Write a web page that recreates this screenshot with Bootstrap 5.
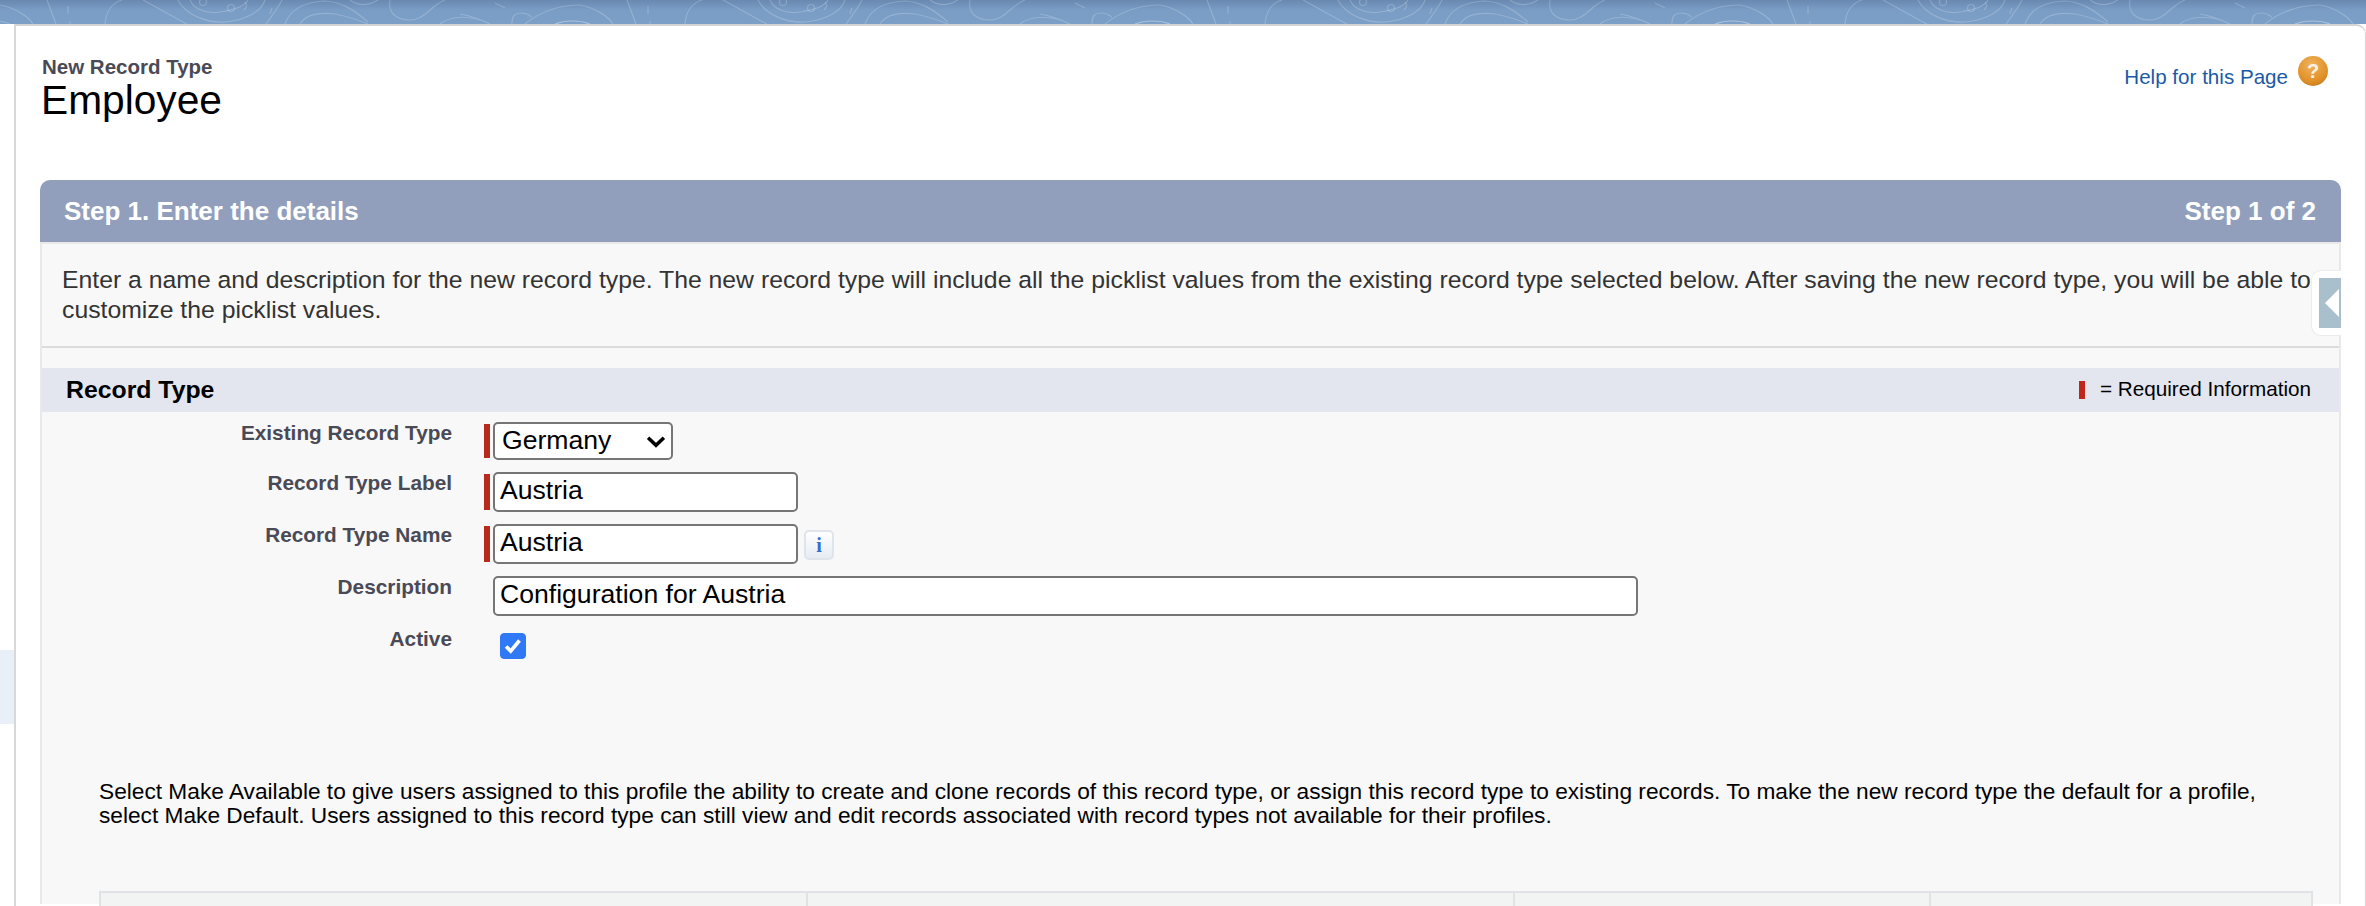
<!DOCTYPE html>
<html lang="en">
<head>
<meta charset="utf-8">
<title>New Record Type</title>
<link href="https://cdn.jsdelivr.net/npm/bootstrap@5.3.0/dist/css/bootstrap.min.css" rel="stylesheet">
<style>
html,body{height:906px;overflow:hidden}
body{font-family:"Liberation Sans",Arial,sans-serif;background:#fff;color:#000}
.sf-strip{height:24px;background:linear-gradient(#6a89b0 0,#6f90b9 4px,#7a9dc5 10px,#7c9fc7 100%);overflow:hidden}
.sf-strip svg{display:block}
.sf-shell{height:882px}
.sf-rail{width:14px;padding-top:626px;flex:none}
.sf-rail-on{height:74px;background:#e8eff9}
.sf-main{border-left:2px solid #d8d8d8;border-top:2px solid #d4d4d4;border-right:1px solid #d4d4d4;border-top-right-radius:10px;padding:0 24px 0 24px;position:relative}
.sf-crumbs{height:154px;padding-top:29px}
.sf-eyebrow{font-size:20.5px;font-weight:700;color:#4a4a56;line-height:24px;margin-left:2px}
.sf-title{font-size:40.7px;line-height:42px;margin:0;font-weight:400;color:#000;margin-left:1px}
.sf-help{padding-top:1px;padding-right:13px;gap:10px}
.sf-help a{font-size:20.6px;color:#1b5aa5;text-decoration:none;line-height:24px;padding-top:9px}
.sf-head{height:62px;background:#919fbc;color:#fff;border-radius:10px 10px 0 0;padding:0 25px 0 24px;font-size:26px;font-weight:700}
.sf-panel{background:#f8f8f8;border:solid #e9e9e9;border-width:2px 2px 0 2px;height:662px;position:relative}
.sf-intro{font-size:24.77px;line-height:30px;color:#333;padding:21px 20px 0 20px;height:104px;border-bottom:2px solid #dcdcdc;margin:0}
.sf-sect{margin-top:20px;height:44px;background:#e3e6ee;padding:0 28px 0 24px}
.sf-sect-t{font-size:24.8px;font-weight:700;color:#000;padding-bottom:1px}
.sf-req{font-size:20.7px;gap:15px;color:#000}
.sf-req-t{padding-bottom:2px}
.sf-reqbar{width:6px;height:18px;background:#c1261a}
.sf-form{padding-top:10px}
.sf-row{margin-bottom:12px;height:40px}
.sf-row-s{height:38px}
.sf-label{width:410px;text-align:right;font-size:20.8px;font-weight:700;color:#4a4a56;line-height:21px;flex:none}
.sf-bar{width:6px;margin:2px 3px 2px 32px;flex:none;background:#b72a1e}
.sf-nobar{width:41px;flex:none}
.sf-field{height:40px;border:2px solid #767676;border-radius:5px;padding:0 5px 3px;font-size:26.6px;line-height:34px;color:#000;background-color:#fff;box-shadow:none;font-family:"Liberation Sans",Arial,sans-serif}
.sf-field:focus{border-color:#767676;box-shadow:none}
.sf-w1{width:305px}
.sf-wdesc{width:1145px}
.sf-sel{width:180px;height:38px;padding:0 5px 3px 7px;line-height:32px;background-size:20px 13px;background-position:right 5px center;background-image:url("data:image/svg+xml,%3csvg xmlns='http://www.w3.org/2000/svg' viewBox='0 0 19 12'%3e%3cpath d='M2 2.500l7.500 7 7.500-7' fill='none' stroke='%23000' stroke-width='3.400'/%3e%3c/svg%3e")}
.sf-info{width:30px;height:30px;margin:6px 0 0 6px;border:2px solid #dfe3ea;border-radius:5px;background:linear-gradient(#fff,#e6ebf4);color:#2f6fd0;font:700 20px/26px "Liberation Serif",serif;text-align:center}
.sf-check{width:26px;height:26px;margin:5px 0 0 7px;border-radius:4px;background-color:#2f78f6;border-color:#2f78f6}
.sf-check:checked{background-color:#2f78f6;border-color:#2f78f6;background-image:url("data:image/svg+xml,%3csvg xmlns='http://www.w3.org/2000/svg' viewBox='0 0 26 26'%3e%3cpath d='M5.500 13.500l5 5 9.500-11.500' fill='none' stroke='%23fff' stroke-width='4'/%3e%3c/svg%3e")}
.sf-note{font-size:22.7px;line-height:24px;color:#000;padding:0 48px 0 57px;margin:111px 0 0}
.sf-table{margin:64px 0 0 57px;width:2214px;height:60px;background:#f2f3f3;border:2px solid #e0e3e5;table-layout:fixed;border-collapse:collapse}
.sf-table td{border-right:2px solid #e0e3e5;padding:0;background:#f2f3f3}
.sf-col-a{width:707px}
.sf-col-c{width:416px}
.sf-tab{position:absolute;right:-2px;top:26px;width:30px;height:66px;background:#fff;border:1px solid #ececec;border-right:0;border-radius:10px 0 0 10px;padding:7px 0 7px 7px}
.sf-tab-in{height:50px;background:#a9bfcc;display:flex;align-items:center}
</style>
</head>
<body class="d-flex flex-column">
<div class="sf-strip flex-shrink-0">
<svg width="2366" height="24" viewBox="0 0 2366 24" fill="none" stroke="#ffffff" stroke-opacity=".2" stroke-width="1.2">
<defs><g id="sf-tile">
<path d="M0 5C15 8 28 16 33 24M47 0L56 24M68 6V14M70 21V24"/>
<path d="M105 24C106 12 112 3 122 0M143 0C158 8 175 18 187 24"/>
<path d="M178 0C185 14 205 23 225 22C248 20 262 10 265 0M190 0C194 10 208 14 220 12C235 10 245 6 248 0"/>
<circle cx="231" cy="8" r="3.500"/><circle cx="203" cy="2" r="3.500"/><path d="M245 2C248 6 246 8 244 10"/>
<path d="M272 8L270 14M282 0C278 8 272 16 266 24M285 24C290 10 302 2 325 1C340 2 352 8 368 22M300 24C306 14 318 12 335 14C346 16 358 20 368 24"/>
<path d="M350 0C358 6 368 6 378 0M390 0C388 12 395 20 410 20C425 20 430 6 445 0"/>
<path d="M495 3L505 8M440 24C450 16 470 14 490 24M460 14C472 16 482 20 490 24"/>
<path d="M512 24C512 16 514 13 522 13C528 13 530 16 532 17M525 24C540 12 560 5 580 5"/>
<path d="M555 24C565 20 580 20 590 24M-25 24C-15 20 0 20 10 24"/>
</g></defs>
<use href="#sf-tile" x="0"/><use href="#sf-tile" x="580"/><use href="#sf-tile" x="1160"/><use href="#sf-tile" x="1740"/><use href="#sf-tile" x="2320"/>
</svg>
</div>
<div class="sf-shell d-flex">
<div class="sf-rail"><div class="sf-rail-on"></div></div>
<main class="sf-main flex-grow-1">
<div class="sf-crumbs d-flex justify-content-between align-items-start">
<div>
<div class="sf-eyebrow">New Record Type</div>
<h1 class="sf-title">Employee</h1>
</div>
<div class="sf-help d-flex align-items-start">
<a href="#">Help for this Page</a>
<svg width="30" height="30" viewBox="0 0 30 30"><defs><radialGradient id="sfg" cx=".45" cy=".3" r=".8"><stop offset="0" stop-color="#f0b35c"/><stop offset=".7" stop-color="#e08f27"/><stop offset="1" stop-color="#b9751f"/></radialGradient></defs><circle cx="15" cy="15" r="15" fill="url(#sfg)"/><text x="15" y="22" text-anchor="middle" fill="#fff" font-family="Liberation Sans" font-weight="700" font-size="20" opacity=".85">?</text></svg>
</div>
</div>
<div class="sf-head d-flex justify-content-between align-items-center">
<span>Step 1. Enter the details</span><span>Step 1 of 2</span>
</div>
<div class="sf-panel">
<p class="sf-intro">Enter a name and description for the new record type. The new record type will include all the picklist values from the existing record type selected below. After saving the new record type, you will be able to customize the picklist values.</p>
<div class="sf-tab"><div class="sf-tab-in"><svg width="22" height="30" viewBox="0 0 22 30"><path d="M6 15L20 1V29Z" fill="#fff"/></svg></div></div>
<div class="sf-sect d-flex justify-content-between align-items-center">
<span class="sf-sect-t">Record Type</span>
<span class="sf-req d-flex align-items-center"><span class="sf-reqbar"></span><span class="sf-req-t">= Required Information</span></span>
</div>
<form class="sf-form">
<div class="sf-row sf-row-s d-flex"><label class="sf-label">Existing Record Type</label><span class="sf-bar"></span><select class="form-select sf-field sf-sel"><option>Germany</option></select></div>
<div class="sf-row d-flex"><label class="sf-label">Record Type Label</label><span class="sf-bar"></span><input class="form-control sf-field sf-w1" value="Austria"></div>
<div class="sf-row d-flex"><label class="sf-label">Record Type Name</label><span class="sf-bar"></span><input class="form-control sf-field sf-w1" value="Austria"><span class="sf-info">i</span></div>
<div class="sf-row d-flex"><label class="sf-label">Description</label><span class="sf-nobar"></span><input class="form-control sf-field sf-wdesc" value="Configuration for Austria"></div>
<div class="sf-row d-flex"><label class="sf-label">Active</label><span class="sf-nobar"></span><input type="checkbox" class="form-check-input sf-check" checked></div>
</form>
<p class="sf-note">Select Make Available to give users assigned to this profile the ability to create and clone records of this record type, or assign this record type to existing records. To make the new record type the default for a profile, select Make Default. Users assigned to this record type can still view and edit records associated with record types not available for their profiles.</p>
<table class="sf-table"><tr><td class="sf-col-a"></td><td class="sf-col-a"></td><td class="sf-col-c"></td><td></td></tr></table>
</div>
</main>
</div>
<script src="https://cdn.jsdelivr.net/npm/bootstrap@5.3.0/dist/js/bootstrap.bundle.min.js"></script>
</body>
</html>
